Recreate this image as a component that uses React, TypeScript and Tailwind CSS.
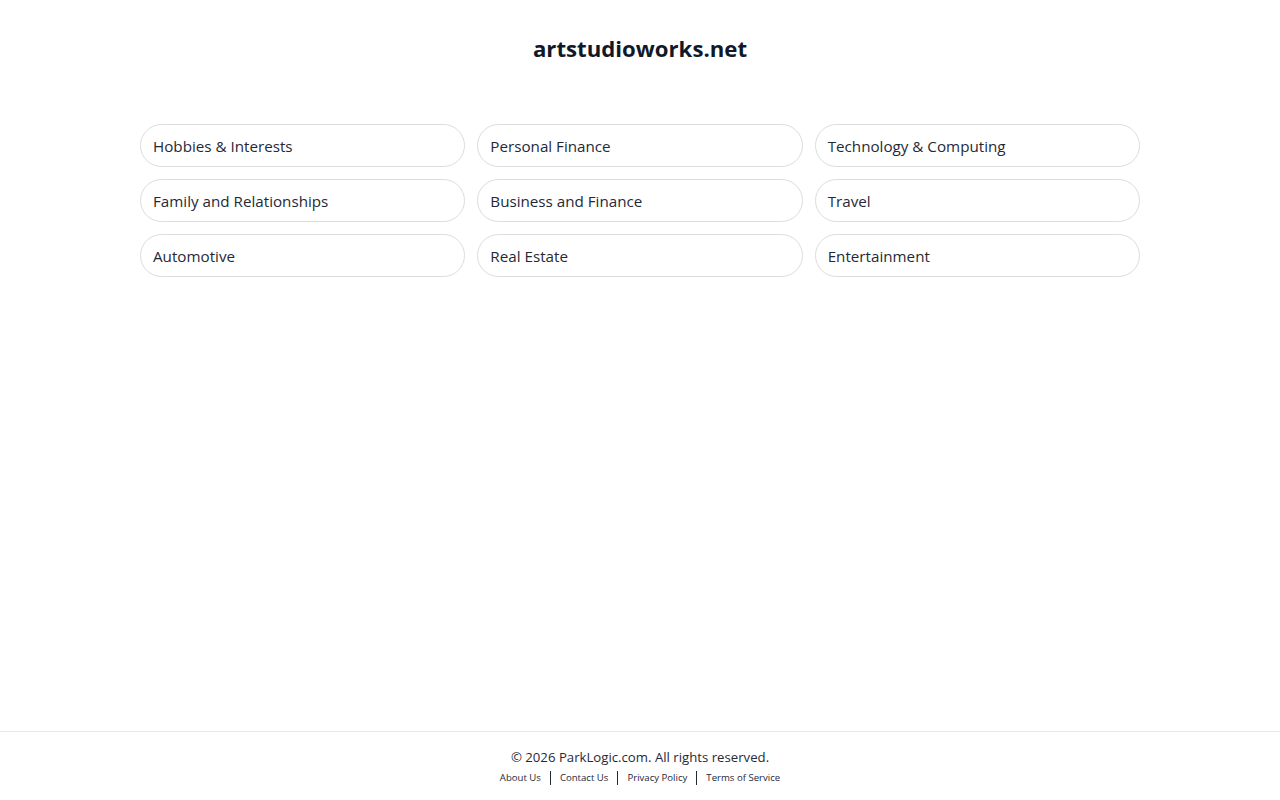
const categories = [
  "Hobbies & Interests",
  "Personal Finance",
  "Technology & Computing",
  "Family and Relationships",
  "Business and Finance",
  "Travel",
  "Automotive",
  "Real Estate",
  "Entertainment",
];

const links = ["About Us", "Contact Us", "Privacy Policy", "Terms of Service"];

const App = () => {
  return (
    <div className="flex min-h-screen flex-col bg-white font-['Open_Sans',sans-serif] text-[#111827]">
      <main className="flex-1">
        <h1 className="pt-[33px] text-center text-[22.2px] leading-8 font-bold">artstudioworks.net</h1>
        <div className="mx-auto mt-[59px] grid w-[1000px] grid-cols-3 gap-3">
          {categories.map((name) => (
            <a
              key={name}
              href="#"
              className="flex h-[43px] items-center rounded-full border border-[#dcdcdc] px-[12px] pt-px text-[15.2px] text-[#1f2937]"
            >
              {name}
            </a>
          ))}
        </div>
      </main>

      {/* Footer */}
      <footer className="h-[69px] border-t border-[#e5e7eb] pt-[15px] text-center">
        <p className="text-[13.2px] leading-5 text-[#1f2937]">© 2026 ParkLogic.com. All rights reserved.</p>
        <div className="mt-[4px] flex items-center justify-center text-[9.6px] text-[#1f2937]">
          {links.map((link, i) => (
            <span key={link} className="flex items-center">
              {i > 0 && <span className="mx-[9px] h-[14px] w-px bg-[#1f2937]" />}
              <a href="#">{link}</a>
            </span>
          ))}
        </div>
      </footer>
    </div>
  );
};

export default App;
